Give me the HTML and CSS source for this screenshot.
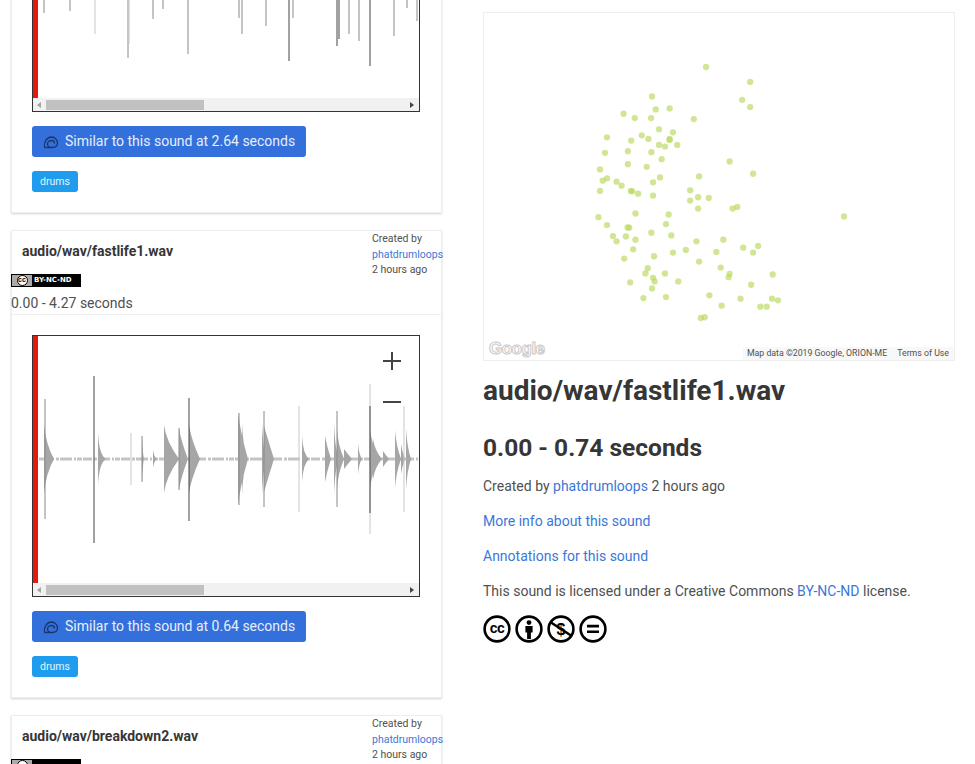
FILE: index.html
```html
<!DOCTYPE html>
<html lang="en">
<head>
  <meta charset="UTF-8">
  <meta name="viewport" content="width=device-width, initial-scale=1.0">
  <title>Sound map</title>
  <link rel="stylesheet" href="styles.css">
</head>
<body>
  <div class="page">
    <div class="sound-list">

      <!-- first card is scrolled past the top of the window -->
      <div class="card card-scrolled">
        <div class="card-body">
          <div class="wave">
            <div class="wave-plot">
              <svg class="wave-svg" viewBox="0 -123 386 247">
                <path class="w-mid" d="M11-39V39M37-37V37M95-84V84M120-45V45M130-35V35M155-80V80M206-44V44M209-60V60M233-52V52M260-44V44M316-60V60M326-67V67M361-62V62M374-34V34M384-47V47"/>
                <path class="w-light" d="M62-60V60M96-70V70"/>
                <path class="w-dark" d="M256-87V87M304-72V72M306-65V65M337-92V92"/>
              </svg>
              <div class="playhead"></div>
            </div>
            <div class="scrollbar">
              <span class="arrow-left"></span>
              <span class="scroll-track"><span class="scroll-thumb"></span></span>
              <span class="arrow-right"></span>
            </div>
          </div>
          <a class="similar-btn">
            <svg class="similar-icon" viewBox="0 0 16 13"><path d="M1.5 11.5C.5 6 4 1 8.5 1 12 1 14.5 4 14.5 7 14.5 10 12 11.5 9 11.5 6 11.5 4.5 9.5 4.5 8 4.5 6 6.5 4.5 8.5 4.5 10.5 4.5 11.5 6 11.5 7.5M1.5 11.5H9"/></svg>
            Similar to this sound at 2.64 seconds
          </a>
          <span class="tag">drums</span>
        </div>
      </div>

      <div class="card">
        <div class="card-head">
          <div class="card-head-main">
            <div class="sound-name">audio/wav/fastlife1.wav</div>
            <div class="cc-badge"><span class="cc-part"><span class="cc-mark">cc</span></span><span class="cc-name">BY-NC-ND</span></div>
          </div>
          <div class="meta">Created by<br><a href="#">phatdrumloops</a><br>2 hours ago</div>
        </div>
        <div class="time-range">0.00 - 4.27 seconds</div>
        <div class="card-body">
          <div class="wave">
            <div class="wave-plot">
              <svg class="wave-svg" viewBox="0 -123 386 247">
                <path class="w-noise" d="M6 0H386"/>
                <!-- each burst: sharp attack, then a decay back to the zero line -->
                <path class="w-burst" d="M11-35Q13-14 21 0Q13 14 11 35ZM65-27Q66-4 73 0Q66 4 65 27ZM109-23Q110-3 111 0Q110 3 109 23ZM120-9Q121-2 124 0Q121 2 120 9ZM131-34Q133-18 146 0Q133 18 131 34ZM146-31Q148-18 155 0Q148 18 146 31ZM156-34Q158-20 167 0Q158 20 156 34ZM205-46Q208-24 215 0Q208 24 205 46ZM209-36Q210-14 214 0Q210 14 209 36ZM229-36Q230-12 233 0Q230 12 229 36ZM231-33Q233-26 241 0Q233 26 231 33ZM269-23Q270-5 276 0Q270 5 269 23ZM292-23Q294-12 298 0Q294 12 292 23ZM301-36Q302-10 306 0Q302 10 301 36ZM304-30Q305-14 311 0Q305 14 304 30ZM311-10Q314-6 319 0Q314 6 311 10ZM325-16Q326-4 329 0Q326 4 325 16ZM337-30Q339-14 346 0Q339 14 337 30ZM340-20Q342-8 349 0Q342 8 340 20ZM350-8Q352-5 356 0Q352 5 350 8ZM362-29Q363-14 368 0Q363 14 362 29ZM368-15Q369-8 372 0Q369 8 368 15ZM373-31Q374-12 378 0Q374 12 373 31Z"/>
                <path class="w-mid" d="M12-60V60M109-23V23M146-31V31M206-46V46M231-48V48M304-48V48"/>
                <path class="w-light" d="M98-26V26M266-53V53M337-75V75M371-53V53"/>
                <path class="w-dark" d="M61-83V84M156-61V62M337-53V54"/>
              </svg>
              <div class="playhead"></div>
              <svg class="zoom-controls" viewBox="0 0 18 60"><path d="M0 9H18M9 0V18M0 50H18"/></svg>
            </div>
            <div class="scrollbar">
              <span class="arrow-left"></span>
              <span class="scroll-track"><span class="scroll-thumb"></span></span>
              <span class="arrow-right"></span>
            </div>
          </div>
          <a class="similar-btn">
            <svg class="similar-icon" viewBox="0 0 16 13"><path d="M1.5 11.5C.5 6 4 1 8.5 1 12 1 14.5 4 14.5 7 14.5 10 12 11.5 9 11.5 6 11.5 4.5 9.5 4.5 8 4.5 6 6.5 4.5 8.5 4.5 10.5 4.5 11.5 6 11.5 7.5M1.5 11.5H9"/></svg>
            Similar to this sound at 0.64 seconds
          </a>
          <span class="tag">drums</span>
        </div>
      </div>

      <div class="card">
        <div class="card-head">
          <div class="card-head-main">
            <div class="sound-name">audio/wav/breakdown2.wav</div>
            <div class="cc-badge"><span class="cc-part"><span class="cc-mark"></span></span></div>
          </div>
          <div class="meta">Created by<br><a href="#">phatdrumloops</a><br>2 hours ago</div>
        </div>
      </div>
    </div>

    <div class="detail">
      <div class="map">
        <svg class="map-dots" viewBox="24 36 1416 1047">
          <circle cx="693" cy="199" r="9.5"/><circle cx="826" cy="244" r="9.5"/><circle cx="802" cy="298" r="9.5"/><circle cx="826" cy="320" r="9.5"/>
          <circle cx="530" cy="288" r="9.5"/><circle cx="541" cy="327" r="9.5"/><circle cx="583" cy="324" r="9.5"/><circle cx="444" cy="340" r="9.5"/>
          <circle cx="478" cy="353" r="9.5"/><circle cx="527" cy="353" r="9.5"/><circle cx="656" cy="356" r="9.5"/><circle cx="551" cy="387" r="9.5"/>
          <circle cx="593" cy="396" r="9.5"/><circle cx="499" cy="405" r="9.5"/><circle cx="519" cy="416" r="9.5"/><circle cx="583" cy="416" r="9.5"/>
          <circle cx="583" cy="419" r="9.5"/><circle cx="467" cy="421" r="9.5"/><circle cx="394" cy="411" r="9.5"/><circle cx="551" cy="434" r="9.5"/>
          <circle cx="569" cy="439" r="9.5"/><circle cx="606" cy="434" r="9.5"/><circle cx="457" cy="453" r="9.5"/><circle cx="528" cy="456" r="9.5"/>
          <circle cx="388" cy="458" r="9.5"/><circle cx="559" cy="477" r="9.5"/><circle cx="764" cy="484" r="9.5"/><circle cx="457" cy="492" r="9.5"/>
          <circle cx="514" cy="500" r="9.5"/><circle cx="373" cy="508" r="9.5"/><circle cx="835" cy="521" r="9.5"/><circle cx="672" cy="529" r="9.5"/>
          <circle cx="554" cy="532" r="9.5"/><circle cx="394" cy="535" r="9.5"/><circle cx="381" cy="542" r="9.5"/><circle cx="423" cy="545" r="9.5"/>
          <circle cx="533" cy="547" r="9.5"/><circle cx="438" cy="557" r="9.5"/><circle cx="645" cy="571" r="9.5"/><circle cx="373" cy="573" r="9.5"/>
          <circle cx="466" cy="573" r="9.5"/><circle cx="470" cy="574" r="9.5"/><circle cx="488" cy="581" r="9.5"/><circle cx="533" cy="587" r="9.5"/>
          <circle cx="669" cy="592" r="9.5"/><circle cx="701" cy="594" r="9.5"/><circle cx="645" cy="602" r="9.5"/><circle cx="787" cy="621" r="9.5"/>
          <circle cx="773" cy="626" r="9.5"/><circle cx="669" cy="626" r="9.5"/><circle cx="480" cy="641" r="9.5"/><circle cx="580" cy="644" r="9.5"/>
          <circle cx="1109" cy="650" r="9.5"/><circle cx="368" cy="652" r="9.5"/><circle cx="572" cy="673" r="9.5"/><circle cx="394" cy="676" r="9.5"/>
          <circle cx="456" cy="683" r="9.5"/><circle cx="461" cy="684" r="9.5"/><circle cx="528" cy="699" r="9.5"/><circle cx="412" cy="709" r="9.5"/>
          <circle cx="451" cy="710" r="9.5"/><circle cx="588" cy="707" r="9.5"/><circle cx="423" cy="725" r="9.5"/><circle cx="480" cy="720" r="9.5"/>
          <circle cx="745" cy="720" r="9.5"/><circle cx="664" cy="725" r="9.5"/><circle cx="850" cy="739" r="9.5"/><circle cx="805" cy="744" r="9.5"/>
          <circle cx="473" cy="749" r="9.5"/><circle cx="632" cy="751" r="9.5"/><circle cx="724" cy="757" r="9.5"/><circle cx="835" cy="759" r="9.5"/>
          <circle cx="593" cy="759" r="9.5"/><circle cx="536" cy="770" r="9.5"/><circle cx="446" cy="777" r="9.5"/><circle cx="672" cy="786" r="9.5"/>
          <circle cx="737" cy="804" r="9.5"/><circle cx="517" cy="806" r="9.5"/><circle cx="510" cy="822" r="9.5"/><circle cx="569" cy="822" r="9.5"/>
          <circle cx="764" cy="823" r="9.5"/><circle cx="761" cy="833" r="9.5"/><circle cx="894" cy="825" r="9.5"/><circle cx="533" cy="835" r="9.5"/>
          <circle cx="538" cy="846" r="9.5"/><circle cx="464" cy="849" r="9.5"/><circle cx="609" cy="846" r="9.5"/><circle cx="829" cy="856" r="9.5"/>
          <circle cx="530" cy="867" r="9.5"/><circle cx="703" cy="888" r="9.5"/><circle cx="504" cy="896" r="9.5"/><circle cx="572" cy="893" r="9.5"/>
          <circle cx="892" cy="898" r="9.5"/><circle cx="797" cy="898" r="9.5"/><circle cx="910" cy="903" r="9.5"/><circle cx="740" cy="919" r="9.5"/>
          <circle cx="857" cy="922" r="9.5"/><circle cx="876" cy="922" r="9.5"/><circle cx="689" cy="954" r="9.5"/><circle cx="677" cy="956" r="9.5"/>
        </svg>
        <span class="map-logo">Google</span>
        <div class="map-credits"><span>Map data ©2019 Google, ORION-ME</span><span>Terms of Use</span></div>
      </div>

      <h3 class="detail-title">audio/wav/fastlife1.wav</h3>
      <h4 class="detail-range">0.00 - 0.74 seconds</h4>
      <p>Created by <a href="#">phatdrumloops</a> 2 hours ago</p>
      <p><a href="#">More info about this sound</a></p>
      <p><a href="#">Annotations for this sound</a></p>
      <p>This sound is licensed under a Creative Commons <a href="#">BY-NC-ND</a> license.</p>

      <div class="cc-icons">
        <svg class="cc-icon" viewBox="0 0 28 28"><circle cx="14" cy="14" r="12.4"/><text class="cc-letters" x="14" y="18.4" text-anchor="middle">cc</text></svg>
        <svg class="cc-icon" viewBox="0 0 28 28"><circle cx="14" cy="14" r="12.4"/><circle class="cc-fill" cx="14" cy="7.6" r="2.4"/><path class="cc-fill" d="M10.4 11H17.6V17.6H15.9V24H12.1V17.6H10.4Z"/></svg>
        <svg class="cc-icon" viewBox="0 0 28 28"><circle cx="14" cy="14" r="12.4"/><text class="cc-dollar" x="14" y="19.5" text-anchor="middle">$</text><path d="M4 7.5 24 20.5"/></svg>
        <svg class="cc-icon" viewBox="0 0 28 28"><circle cx="14" cy="14" r="12.4"/><path class="cc-fill" d="M8 9.8H20V12.4H8ZM8 15.4H20V18H8Z"/></svg>
      </div>
    </div>
  </div>
</body>
</html>
```

FILE: styles.css
```css
* {
  box-sizing: border-box;
}

html, body {
  margin: 0;
  height: 764px;
  overflow: hidden;
  background-color: #fff;
}

body {
  font-family: Roboto, "Liberation Sans", sans-serif;
  font-size: 14px;
  line-height: 21px;
  color: #505050;
}

a {
  color: #3b77d8;
  text-decoration: none;
}

.page {
  display: flex;
  align-items: flex-start;
  padding-left: 11px;
}

/* Left column */
.sound-list {
  width: 431px;
  display: flex;
  flex-direction: column;
  gap: 17px;
}

.card {
  background-color: #fff;
  box-shadow: inset 0 0 0 1px #eee, 0 1px 2px rgba(10, 10, 10, 0.18);
}

.card-scrolled {
  margin-top: -150px;
}

.card-scrolled .card-body {
  padding-top: 0;
}

.card-head {
  display: flex;
}

.card-head-main {
  flex: 1;
  padding-top: 12px;
}

.sound-name {
  padding-left: 11px;
  font-weight: bold;
  line-height: 18px;
  color: #363636;
}

.meta {
  width: 70px;
  padding-top: 1px;
  font-size: 10.5px;
  line-height: 15.6px;
  white-space: nowrap;
}

.cc-badge {
  display: flex;
  width: 70px;
  height: 13px;
  margin-top: 14px;
  border: 1px solid #000;
  background-color: #000;
}

.cc-part {
  width: 20px;
  display: flex;
  align-items: center;
  justify-content: center;
  background-color: #aaa;
}

.cc-mark {
  width: 11px;
  height: 11px;
  border: 1px solid #000;
  border-radius: 50%;
  background-color: #fff;
  color: #000;
  font-family: "Liberation Sans", sans-serif;
  font-size: 7px;
  font-weight: bold;
  line-height: 8px;
  text-align: center;
}

.cc-name {
  padding-left: 2px;
  color: #fff;
  font-family: "DejaVu Sans", sans-serif;
  font-size: 7px;
  font-weight: bold;
  line-height: 11px;
}

.time-range {
  padding-top: 6px;
  height: 28px;
  border-bottom: 1px solid #eee;
}

.card-body {
  padding: 20px 21px 21px;
}

/* Waveform */
.wave {
  width: 388px;
  height: 262px;
  border: 1px solid #333;
  display: flex;
  flex-direction: column;
}

.wave-plot {
  position: relative;
  flex: 1;
  overflow: hidden;
}

.wave-svg {
  display: block;
  width: 386px;
  height: 247px;
  filter: blur(0.3px);
}

.wave-svg path {
  fill: none;
  stroke-width: 1;
}

.w-dark {
  stroke: #444;
}

.w-mid {
  stroke: #8a8a8a;
}

.w-light {
  stroke: #c8c8c8;
}

.wave-svg .w-burst {
  fill: #a6a6a6;
  stroke: none;
}

.wave-svg .w-noise {
  stroke: #c4c4c4;
  stroke-width: 3;
  stroke-dasharray: 5 1 9 2 3 1 12 2 2 1;
}

.playhead {
  position: absolute;
  top: 0;
  bottom: 0;
  left: 0;
  width: 5px;
  background-color: #e8180c;
}

.zoom-controls {
  position: absolute;
  top: 16px;
  right: 18px;
  width: 18px;
  height: 60px;
}

.zoom-controls path {
  fill: none;
  stroke: #444;
  stroke-width: 2;
}

.scrollbar {
  height: 13px;
  display: flex;
  align-items: center;
  background-color: #f1f1f1;
}

.arrow-left {
  margin-left: 4px;
  border: 3px solid transparent;
  border-left: 0;
  border-right: 4px solid #a3a3a3;
}

.arrow-right {
  margin-right: 5px;
  border: 3px solid transparent;
  border-right: 0;
  border-left: 4px solid #444;
}

.scroll-track {
  flex: 1;
  padding-left: 5px;
}

.scroll-thumb {
  display: block;
  width: 158px;
  height: 10px;
  background-color: #c1c1c1;
}

/* Button and tag */
.similar-btn {
  display: flex;
  align-items: center;
  gap: 6px;
  width: 274px;
  height: 31px;
  margin-top: 14px;
  padding-left: 11px;
  border-radius: 3px;
  background-color: #3370dc;
  color: #e6eefb;
}

.similar-icon {
  width: 16px;
  height: 13px;
  margin-top: 2px;
}

.similar-icon path {
  fill: none;
  stroke: #1a3566;
  stroke-width: 1.3;
}

.tag {
  display: block;
  width: 46px;
  height: 21px;
  margin-top: 14px;
  border-radius: 3px;
  background-color: #209cee;
  color: #e3f3fd;
  font-size: 10.5px;
  line-height: 21px;
  text-align: center;
}

/* Right column */
.detail {
  width: 472px;
  margin-left: 41px;
  padding-top: 12px;
}

.map {
  position: relative;
  height: 349px;
  border: 1px solid #eee;
}

.map-dots {
  display: block;
  width: 100%;
  height: 100%;
}

.map-dots circle {
  fill: #b9d95c;
  fill-opacity: 0.65;
}

.map-logo {
  position: absolute;
  left: 5px;
  bottom: 1px;
  color: #fff;
  font-family: "Liberation Sans", sans-serif;
  font-size: 17px;
  font-weight: bold;
  letter-spacing: -0.5px;
  -webkit-text-stroke: 1px #c9c9c9;
}

.map-credits {
  position: absolute;
  right: 0;
  bottom: 0;
  display: flex;
  gap: 10px;
  padding: 0 5px 0 4px;
  background-color: rgba(245, 245, 245, 0.75);
  font-size: 8.75px;
  line-height: 13px;
}

.detail-title {
  margin: 15px 0 0;
  font-size: 28px;
  line-height: 30px;
  color: #363636;
}

.detail-range {
  margin: 27px 0 0;
  font-size: 24.5px;
  line-height: 30px;
  color: #363636;
}

.detail p {
  margin: 14px 0;
}

.detail-range + p {
  margin-top: 13px;
}

.cc-icons {
  display: flex;
  gap: 4px;
  margin-top: -1px;
}

.cc-icon {
  width: 28px;
  height: 28px;
}

.cc-icon circle,
.cc-icon path {
  fill: none;
  stroke: #000;
  stroke-width: 2.6;
}

.cc-icon .cc-fill {
  fill: #000;
  stroke: none;
}

.cc-letters,
.cc-dollar {
  font-family: "Liberation Sans", sans-serif;
  font-weight: bold;
  fill: #000;
}

.cc-letters {
  font-size: 14px;
  letter-spacing: -0.5px;
}

.cc-dollar {
  font-size: 16px;
}
```
